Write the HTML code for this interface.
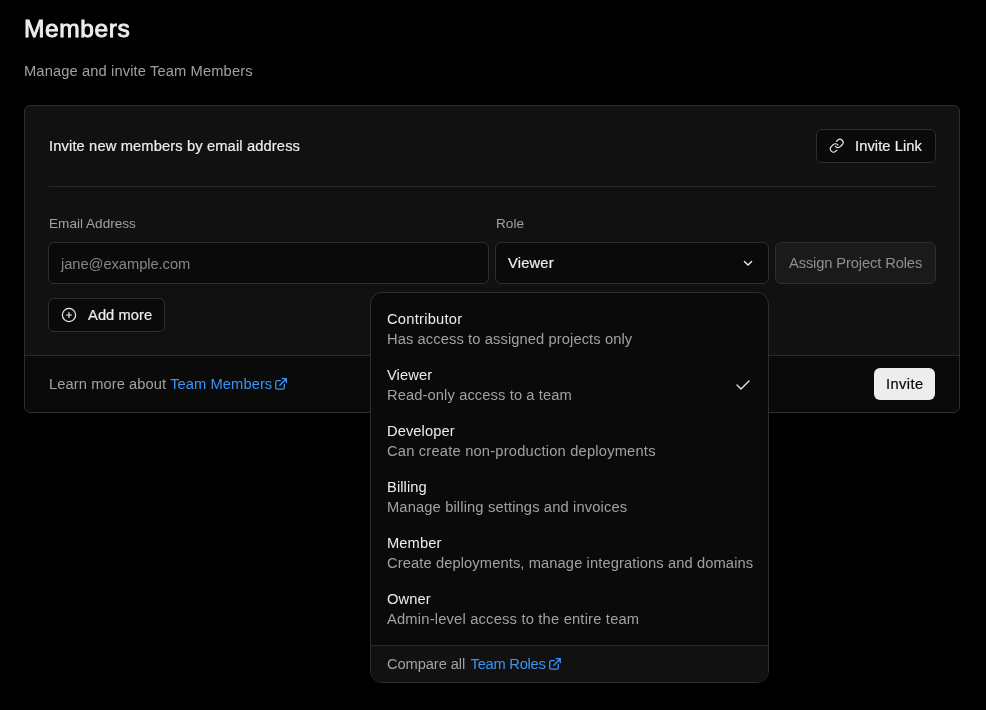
<!DOCTYPE html>
<html><head><meta charset="utf-8">
<style>
html,body{margin:0;padding:0;}
body{width:986px;height:710px;overflow:hidden;background:#000;position:relative;will-change:transform;font-family:"Liberation Sans",sans-serif;color:#ededed;}
.a{position:absolute;white-space:nowrap;}
.t14{font-size:14.7px;line-height:20px;letter-spacing:0.08px;}
.t13{font-size:13.6px;line-height:20px;}
.med{-webkit-text-stroke:0.2px currentColor;}
.muted{color:#a1a1a1;}
.blue{color:#3b93f7;}
.box{position:absolute;box-sizing:border-box;border:1px solid #2e2e2e;}
</style></head>
<body>
<div class="a" style="left:24px;top:13px;font-size:24.5px;line-height:32px;font-weight:400;-webkit-text-stroke:0.9px #ededed;letter-spacing:0.62px;color:#ededed;">Members</div>
<div class="a t14 muted" style="left:24px;top:61px;letter-spacing:0.12px;">Manage and invite Team Members</div>

<!-- card -->
<div class="box" style="left:24px;top:105px;width:936px;height:308px;background:#111111;border-radius:6px;overflow:hidden;">
  <div class="a t14 med" style="left:24px;top:30px;letter-spacing:0.13px;">Invite new members by email address</div>
  <div class="box" style="left:791px;top:23px;width:120px;height:34px;background:#0a0a0a;border-radius:6px;">
    <svg class="a" style="left:12.3px;top:8.3px" width="15.4" height="15.4" viewBox="0 0 24 24" fill="none" stroke="#ededed" stroke-width="1.8" stroke-linecap="round" stroke-linejoin="round"><path d="M10 13a5 5 0 0 0 7.54.54l3-3a5 5 0 0 0-7.07-7.07l-1.72 1.71"/><path d="M14 11a5 5 0 0 0-7.54-.54l-3 3a5 5 0 0 0 7.07 7.07l1.71-1.71"/></svg>
    <div class="a t14 med" style="left:38px;top:6px;">Invite Link</div>
  </div>
  <div class="a" style="left:24px;top:80px;width:886px;height:1px;background:#2a2a2a;"></div>

  <div class="a t13 muted" style="left:24px;top:108px;">Email Address</div>
  <div class="a t13 muted" style="left:471px;top:108px;">Role</div>

  <div class="box" style="left:23px;top:136px;width:441px;height:42px;background:#0a0a0a;border-radius:6px;">
    <div class="a t14" style="left:12px;top:10.5px;color:#868686;letter-spacing:-0.05px;">jane@example.com</div>
  </div>
  <div class="box" style="left:470px;top:136px;width:274px;height:42px;background:#0a0a0a;border-radius:6px;">
    <div class="a t14 med" style="left:12px;top:10px;letter-spacing:0.2px;">Viewer</div>
    <svg class="a" style="left:247px;top:16.6px" width="10" height="7" viewBox="0 0 10 7" fill="none" stroke="#ededed" stroke-width="1.4" stroke-linecap="round" stroke-linejoin="round"><path d="M1.4 1.4 L5 4.9 L8.6 1.4"/></svg>
  </div>
  <div class="box" style="left:750px;top:136px;width:161px;height:42px;background:#1a1a1a;border-radius:6px;">
    <div class="a t14" style="left:13px;top:10px;color:#8f8f8f;letter-spacing:-0.12px;">Assign Project Roles</div>
  </div>

  <div class="box" style="left:23px;top:192px;width:117px;height:34px;background:#0a0a0a;border-radius:6px;">
    <svg class="a" style="left:12px;top:8.3px" width="16" height="16" viewBox="0 0 16 16" fill="none" stroke="#ededed" stroke-width="1.2" stroke-linecap="round">
      <circle cx="8" cy="8" r="6.6"/><path d="M8 5.5 V10.5 M5.5 8 H10.5"/>
    </svg>
    <div class="a t14 med" style="left:39px;top:6px;">Add more</div>
  </div>

  <!-- footer -->
  <div class="a" style="left:0;top:249px;width:934px;height:58px;background:#0a0a0a;border-top:1px solid #2a2a2a;">
    <div class="a t14 muted" style="left:24px;top:18px;">Learn more about <span class="blue">Team Members</span></div><svg class="a" style="left:249px;top:21px" width="14" height="14" viewBox="0 0 14 14" fill="none" stroke="#3b93f7" stroke-width="1.3" stroke-linecap="round" stroke-linejoin="round"><path d="M6.3 3.7 H3.2 a1.5 1.5 0 0 0 -1.5 1.5 V10.7 a1.5 1.5 0 0 0 1.5 1.5 H8.8 a1.5 1.5 0 0 0 1.5 -1.5 V7.5"/><path d="M8.3 1.7 H12.3 V5.7 M12.3 1.7 L5.8 8.2"/></svg>
    <div class="a" style="left:849px;top:12px;width:61px;height:32px;background:#ededed;border-radius:6px;">
      <div class="a t14 med" style="left:12px;top:6px;color:#0a0a0a;letter-spacing:0.4px;">Invite</div>
    </div>
  </div>
</div>

<!-- dropdown -->
<div class="box" style="left:370px;top:292px;width:399px;height:391px;background:#0a0a0a;border-radius:12px;overflow:hidden;">
  <div class="a t14" style="left:16px;top:16px;letter-spacing:0.25px;">Contributor</div>
  <div class="a t14 muted" style="letter-spacing:0.1px;left:16px;top:36px;">Has access to assigned projects only</div>
  <div class="a t14" style="left:16px;top:72px;">Viewer</div>
  <div class="a t14 muted" style="letter-spacing:0.11px;left:16px;top:92px;">Read-only access to a team</div>
  <svg class="a" style="left:364px;top:85.6px" width="16" height="12" viewBox="0 0 16 12" fill="none" stroke="#ededed" stroke-width="1.25" stroke-linecap="round" stroke-linejoin="round"><path d="M2 6 L6 10 L14 2"/></svg>
  <div class="a t14" style="left:16px;top:128px;">Developer</div>
  <div class="a t14 muted" style="letter-spacing:0.2px;left:16px;top:148px;">Can create non-production deployments</div>
  <div class="a t14" style="left:16px;top:184px;">Billing</div>
  <div class="a t14 muted" style="letter-spacing:0.14px;left:16px;top:204px;">Manage billing settings and invoices</div>
  <div class="a t14" style="left:16px;top:240px;">Member</div>
  <div class="a t14 muted" style="letter-spacing:0.105px;left:16px;top:260px;">Create deployments, manage integrations and domains</div>
  <div class="a t14" style="left:16px;top:296px;">Owner</div>
  <div class="a t14 muted" style="letter-spacing:0.2px;left:16px;top:316px;">Admin-level access to the entire team</div>
  <div class="a" style="left:0;top:352px;width:397px;height:37px;background:#111111;border-top:1px solid #2a2a2a;">
    <div class="a t14 muted" style="letter-spacing:-0.1px;left:16px;top:8px;">Compare all <span class="blue" style="margin-left:1.5px;letter-spacing:-0.25px">Team Roles</span></div><svg class="a" style="left:177px;top:11px" width="14" height="14" viewBox="0 0 14 14" fill="none" stroke="#3b93f7" stroke-width="1.3" stroke-linecap="round" stroke-linejoin="round"><path d="M6.3 3.7 H3.2 a1.5 1.5 0 0 0 -1.5 1.5 V10.7 a1.5 1.5 0 0 0 1.5 1.5 H8.8 a1.5 1.5 0 0 0 1.5 -1.5 V7.5"/><path d="M8.3 1.7 H12.3 V5.7 M12.3 1.7 L5.8 8.2"/></svg>
  </div>
</div>
</body></html>
